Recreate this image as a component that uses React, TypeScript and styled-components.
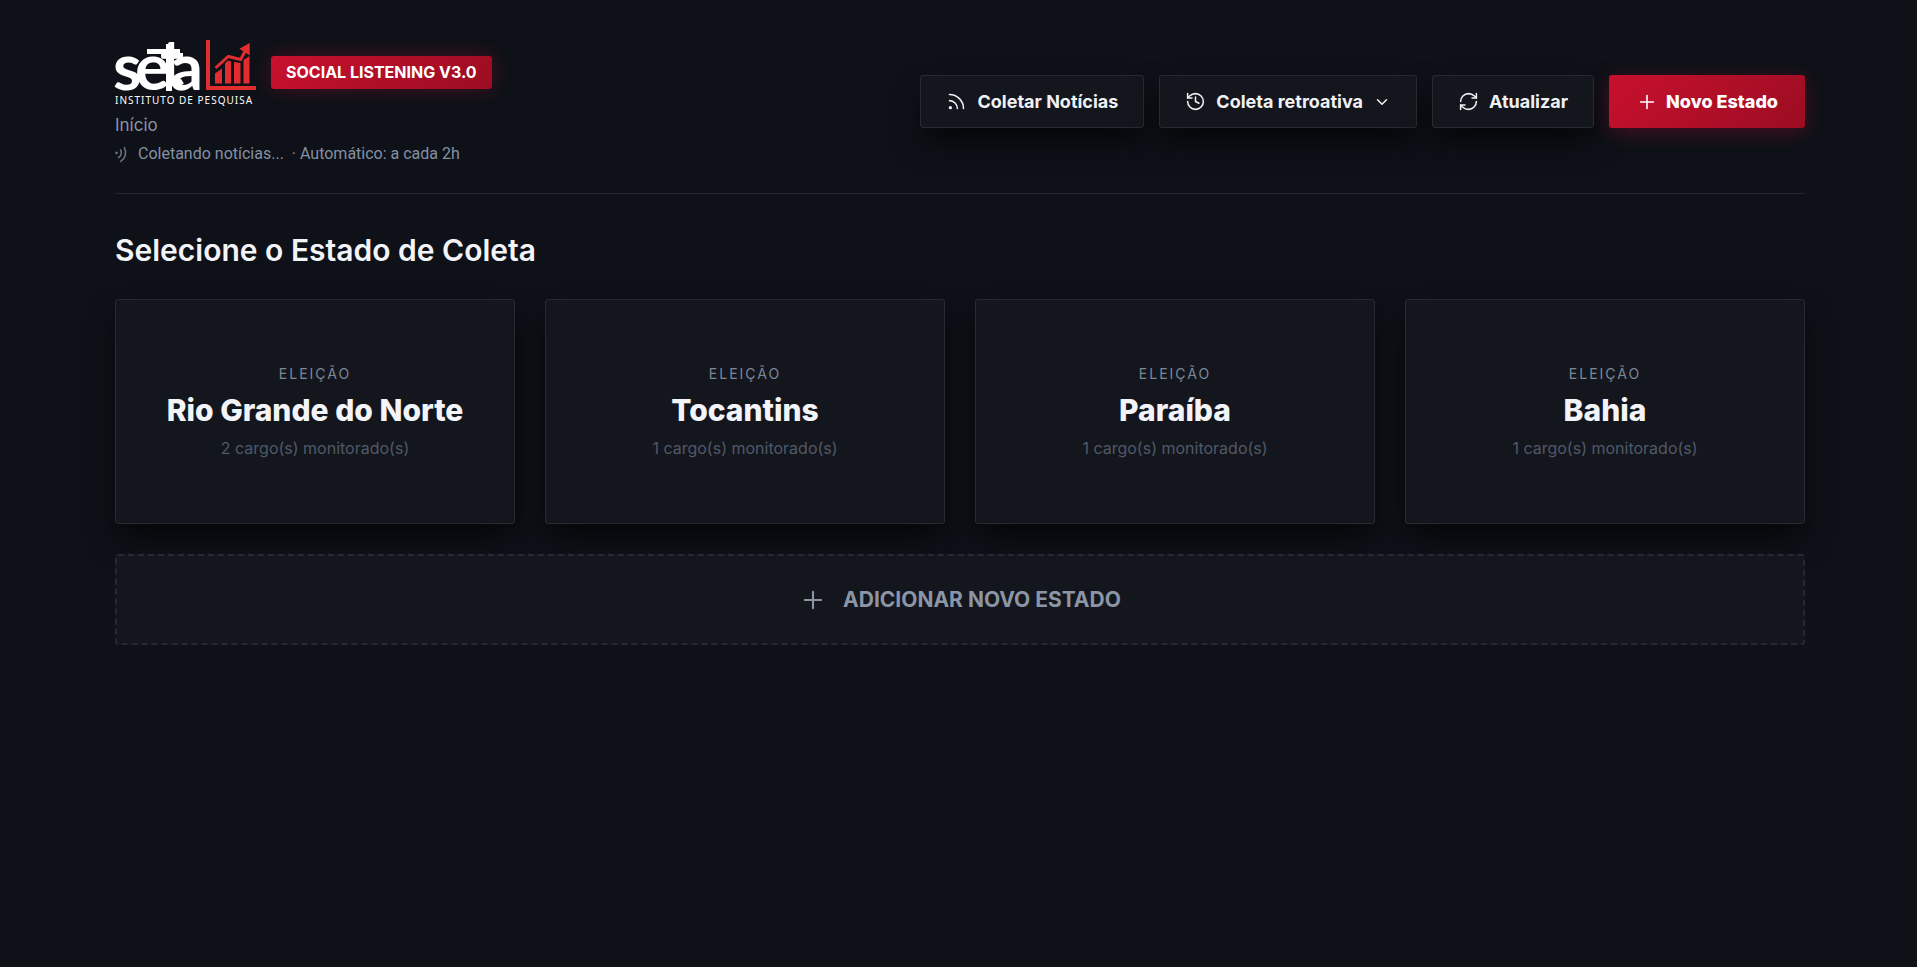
import React from "react";
import styled, { createGlobalStyle, css } from "styled-components";
import { ChevronDown, History, Plus, RefreshCw, Rss } from "lucide-react";

const GlobalStyle = createGlobalStyle`
  *, *::before, *::after { box-sizing: border-box; }
  body {
    margin: 0;
    min-height: 100vh;
    background: #0e1118;
    color: #f3f4f8;
    font-family: Inter, "Noto Sans", sans-serif;
  }
  button { font-family: inherit; cursor: pointer; }
`;

const raised = css`
  box-shadow: 0 16px 30px -2px rgba(0, 0, 0, 0.65);
`;

const Page = styled.div`
  padding: 40px 112px 40px 115px;
`;

const Header = styled.header`
  display: flex;
  align-items: center;
  justify-content: space-between;
  gap: 30px;
  padding-bottom: 30px;
  border-bottom: 1px solid #22252b;
`;

const Brand = styled.div`
  display: flex;
  align-items: center;
  gap: 15px;
`;

const LogoSvg = styled.svg`
  display: block;
  width: 141px;
  height: 65px;
  overflow: visible;
`;

const Version = styled.span`
  padding: 0 15px;
  border-radius: 3px;
  background: linear-gradient(135deg, #c8102e, #9b0d22);
  box-shadow: 0 0 20px rgba(200, 16, 46, 0.3);
  color: #fff;
  font-size: 16px;
  font-weight: 700;
  line-height: 33px;
`;

const Crumb = styled.div`
  margin-top: 6px;
  color: #8994a6;
  font-size: 17px;
  line-height: 28px;
`;

const Status = styled.div`
  display: flex;
  align-items: center;
  gap: 8px;
  margin-top: 6px;
  color: #8490a3;
  font-family: Roboto, sans-serif;
  font-size: 16px;
  line-height: 18px;

  svg { color: #6a7280; transform: rotate(60deg); }
`;

const Actions = styled.div`
  display: flex;
  gap: 15px;
`;

const Action = styled.button<{ $primary?: boolean }>`
  display: flex;
  align-items: center;
  gap: 10px;
  min-height: 53px;
  padding: 0 25px;
  border: 1px solid #272a32;
  border-radius: 3px;
  background: #14161e;
  color: #f0f1f4;
  font-size: 18px;
  font-weight: 700;
  ${raised}
  ${(p) =>
    p.$primary &&
    css`
      gap: 8px;
      padding: 0 26px;
      border-color: transparent;
      background: linear-gradient(135deg, #c8102e, #9b0d22) border-box;
      box-shadow: 0 4px 20px rgba(200, 16, 46, 0.3);
      color: #fff;
      font-weight: 800;
    `}
`;

const Title = styled.h1`
  margin: 38px 0 31px;
  font-size: 30px;
  font-weight: 600;
  line-height: 36px;
`;

const Grid = styled.div`
  display: grid;
  grid-template-columns: repeat(4, 1fr);
  gap: 30px;
`;

const Card = styled.button`
  display: flex;
  flex-direction: column;
  align-items: center;
  justify-content: center;
  gap: 6px;
  min-height: 225px;
  border: 1px solid #272a32;
  border-radius: 3px;
  background: #14161e;
  ${raised}
`;

const Kind = styled.span`
  color: #7d8796;
  font-size: 14px;
  letter-spacing: 2px;
  line-height: 20px;
`;

const StateName = styled.span`
  color: #f3f4f8;
  font-size: 30px;
  font-weight: 800;
  line-height: 40px;
`;

const Count = styled.span`
  color: #505967;
  font-size: 16px;
  line-height: 24px;
`;

const AddState = styled.button`
  display: flex;
  grid-column: 1 / -1;
  align-items: center;
  justify-content: center;
  gap: 16px;
  min-height: 91px;
  border: 2px dashed #26292e;
  border-radius: 3px;
  background: rgba(21, 24, 31, 0.85);
  color: #8b95a6;
  font-size: 21px;
  font-weight: 700;
`;

const states = [
  { name: "Rio Grande do Norte", count: 2 },
  { name: "Tocantins", count: 1 },
  { name: "Paraíba", count: 1 },
  { name: "Bahia", count: 1 },
];

function Logo() {
  return (
    <LogoSvg viewBox="0 0 141 65" role="img" aria-label="Seta Instituto de Pesquisa">
      <g fill="#fff">
        <text x="-2 20 45 55" y="50 50 46 50" fontFamily="Lato, sans-serif" fontSize="65" fontWeight="700">
          seta
        </text>
        <rect x="32" y="9" width="33" height="5" />
        <rect x="51" y="4" width="6" height="47" />
        <text x="0" y="64" fontFamily="'Noto Sans', sans-serif" fontSize="10" letterSpacing="1">
          INSTITUTO DE PESQUISA
        </text>
      </g>
      <g fill="#e12d2f">
        <path d="M91 0h4v46h46v4H91z" />
        <path d="M100 33.500l7-5v15h-7zM110 23.500l3-3 3 1v22h-6zM119 22l6.500 1v20.500H119zM128.500 20l6-4v27.500h-6z" />
        <path d="M134.700 3v12.500l-10.400-6.800z" />
        <path d="M100.500 28l12.800-11.500 12.400 3 5-9.500" fill="none" stroke="#e12d2f" strokeWidth="3" />
      </g>
    </LogoSvg>
  );
}

export default function App() {
  return (
    <>
      <GlobalStyle />
      <Page>
        <Header>
          <div>
            <Brand>
              <Logo />
              <Version>SOCIAL LISTENING V3.0</Version>
            </Brand>
            <Crumb>Início</Crumb>
            <Status>
              <Rss size={15} strokeWidth={2.5} />
              <span>Coletando notícias...</span>
              <span>· Automático: a cada 2h</span>
            </Status>
          </div>
          <Actions>
            <Action type="button">
              <Rss size={21} strokeWidth={1.75} />
              Coletar Notícias
            </Action>
            <Action type="button">
              <History size={21} strokeWidth={1.75} />
              Coleta retroativa
              <ChevronDown size={18} strokeWidth={2} />
            </Action>
            <Action type="button">
              <RefreshCw size={21} strokeWidth={1.75} />
              Atualizar
            </Action>
            <Action type="button" $primary>
              <Plus size={22} strokeWidth={1.75} />
              Novo Estado
            </Action>
          </Actions>
        </Header>
        <main>
          <Title>Selecione o Estado de Coleta</Title>
          <Grid>
            {states.map((s) => (
              <Card type="button" key={s.name}>
                <Kind>ELEIÇÃO</Kind>
                <StateName>{s.name}</StateName>
                <Count>{s.count} cargo(s) monitorado(s)</Count>
              </Card>
            ))}
            <AddState type="button">
              <Plus size={28} strokeWidth={1.75} />
              ADICIONAR NOVO ESTADO
            </AddState>
          </Grid>
        </main>
      </Page>
    </>
  );
}
